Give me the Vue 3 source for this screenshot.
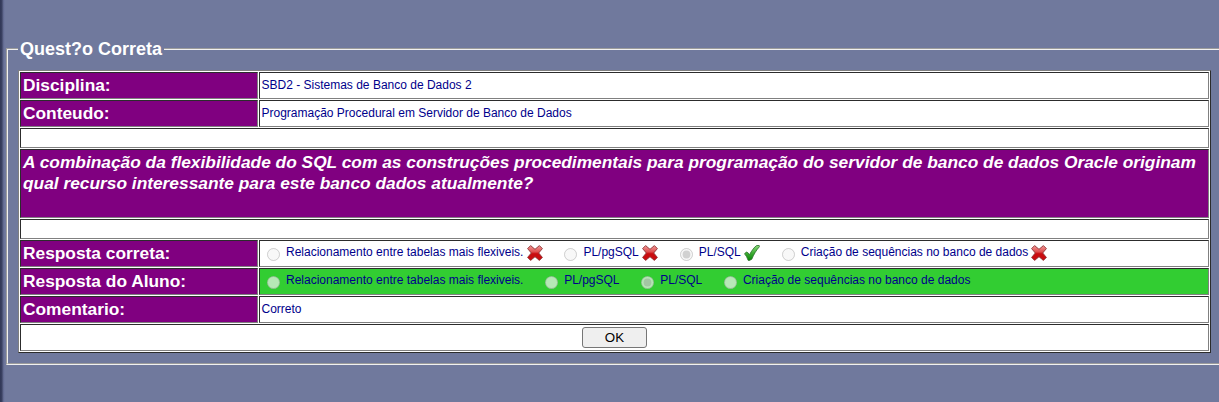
<script setup>
const options = [
  { text: 'Relacionamento entre tabelas mais flexiveis.', correct: false },
  { text: 'PL/pgSQL', correct: false },
  { text: 'PL/SQL', correct: true },
  { text: 'Criação de sequências no banco de dados', correct: false },
]
</script>

<template>
  <main class="page">
    <fieldset class="panel">
      <legend>Quest?o Correta</legend>
      <table class="sheet">
        <colgroup><col class="c1" /><col /></colgroup>
        <tbody>
          <tr class="row"><th>Disciplina:</th><td class="plain">SBD2 - Sistemas de Banco de Dados 2</td></tr>
          <tr class="row"><th>Conteudo:</th><td class="plain">Programação Procedural em Servidor de Banco de Dados</td></tr>
          <tr class="gap"><td colspan="2"></td></tr>
          <tr class="ask"><td colspan="2">A combinação da flexibilidade do SQL com as construções procedimentais para programação do servidor de banco de dados Oracle originam<br />qual recurso interessante para este banco dados atualmente?</td></tr>
          <tr class="gap"><td colspan="2"></td></tr>
          <tr class="row">
            <th>Resposta correta:</th>
            <td>
              <div class="options">
                <label v-for="o in options" :key="o.text" class="option">
                  <input type="radio" name="correct" disabled :checked="o.correct" />
                  <span>{{ o.text }}</span>
                  <svg v-if="o.correct" class="icon" viewBox="0 0 16 16">
                    <defs><linearGradient id="gc" x1="0" y1="0" x2="0" y2="1"><stop offset="0" stop-color="#8ad87c" /><stop offset=".5" stop-color="#3fae35" /><stop offset="1" stop-color="#058305" /></linearGradient></defs>
                    <path d="M.5 8.7 2.4 7.1Q3.8 6.8 5.4 9.8C7.8 5.6 10 2.3 12.7.5H15.2L15.6 1.5C12.4 5 9.6 9.6 7.8 14.2L5.2 15.6 4.1 15.3C3.3 12.8 2.2 10.6.5 8.7Z" fill="url(#gc)" stroke="#2b6e2b" stroke-width=".8" stroke-linejoin="round" />
                  </svg>
                  <svg v-else class="icon" viewBox="0 0 16 16">
                    <defs><linearGradient id="gx" x1="0" y1="0" x2="0" y2="1"><stop offset="0" stop-color="#f19a98" /><stop offset=".42" stop-color="#df4f4f" /><stop offset=".55" stop-color="#c90d10" /><stop offset="1" stop-color="#c90c10" /></linearGradient></defs>
                    <path d="M3.6.6 8 4.3 12.4.6 15.4 3.6 11.7 8 15.4 12.4 12.4 15.4 8 11.7 3.6 15.4.6 12.4 4.3 8 .6 3.6Z" fill="url(#gx)" stroke="#8c3436" stroke-width=".9" stroke-linejoin="round" />
                  </svg>
                </label>
              </div>
            </td>
          </tr>
          <tr class="row green">
            <th>Resposta do Aluno:</th>
            <td>
              <div class="options">
                <label v-for="o in options" :key="o.text" class="option">
                  <input type="radio" name="student" disabled :checked="o.correct" />
                  <span>{{ o.text }}</span>
                </label>
              </div>
            </td>
          </tr>
          <tr class="row"><th>Comentario:</th><td class="plain">Correto</td></tr>
          <tr class="row"><td colspan="2" class="action"><button type="button">OK</button></td></tr>
        </tbody>
      </table>
    </fieldset>
  </main>
</template>

<style>
body { margin: 0; overflow: hidden; background: #70799d; }
</style>

<style scoped>
.page {
  box-sizing: border-box;
  width: 1219px;
  height: 402px;
  padding: 39px 0 0 6px;
  overflow: hidden;
  font-family: "Liberation Sans", Arial, sans-serif;
  background: linear-gradient(to right, #303655 0, #3b4263 2px, #5c6488 3px, #69719a 4px, #70799d 5px);
}
.panel {
  box-sizing: border-box;
  width: 1225px;
  height: 326px;
  margin: 0;
  padding: 11px 10px 0;
  border: 2px groove #f0f0f0;
  min-width: 0;
}
legend {
  height: 20px;
  padding: 0 2px;
  color: #fff;
  font-size: 18px;
  font-weight: bold;
  line-height: 21px;
}
.sheet {
  box-sizing: border-box;
  table-layout: fixed;
  width: 1193px;
  height: 283px;
  background: #fff;
  border: 1px solid;
  border-color: #808080 #2c2c2c #2c2c2c #808080;
  border-collapse: separate;
  border-spacing: 1px;
}
.c1 { width: 238px; }
th, td {
  box-sizing: border-box;
  padding: 0 1px;
  border: 1px solid;
  border-color: #2c2c2c #808080 #808080 #2c2c2c;
  text-align: left;
  white-space: nowrap;
}
td { color: #00008b; font-size: 12px; line-height: 14px; }
.plain { padding: 0 1.5px 1px; }
th { padding: 0 2px 1px; color: #fff; background: #800080; font-size: 17.33px; line-height: 20px; }
.row > * { height: 27px; }
.gap > * { height: 20px; }
.ask > td {
  height: 69px;
  padding: 2px 2px 0;
  vertical-align: top;
  color: #fff;
  background: #800080;
  font-size: 17.33px;
  font-weight: bold;
  font-style: italic;
  line-height: 21px;
}
.green > td { background: #32cd32; }
.options { display: flex; height: 25px; padding-left: 6px; gap: 21.7px; }
.option { display: flex; height: 25px; }
.option input { width: 13px; height: 13px; margin: 7px 6px 0 0; }
.option span { padding-top: 4px; }
.icon { width: 16px; height: 16px; margin: 4px .2px 0 3.1px; }
.action { text-align: center; line-height: 0; }
button {
  box-sizing: border-box;
  width: 65px;
  height: 21px;
  padding: 0;
  color: #000;
  background: #efefef;
  border: 1px solid #767676;
  border-radius: 3px;
  font: 13.333px/17px "Liberation Sans", Arial, sans-serif;
  vertical-align: middle;
}
</style>
